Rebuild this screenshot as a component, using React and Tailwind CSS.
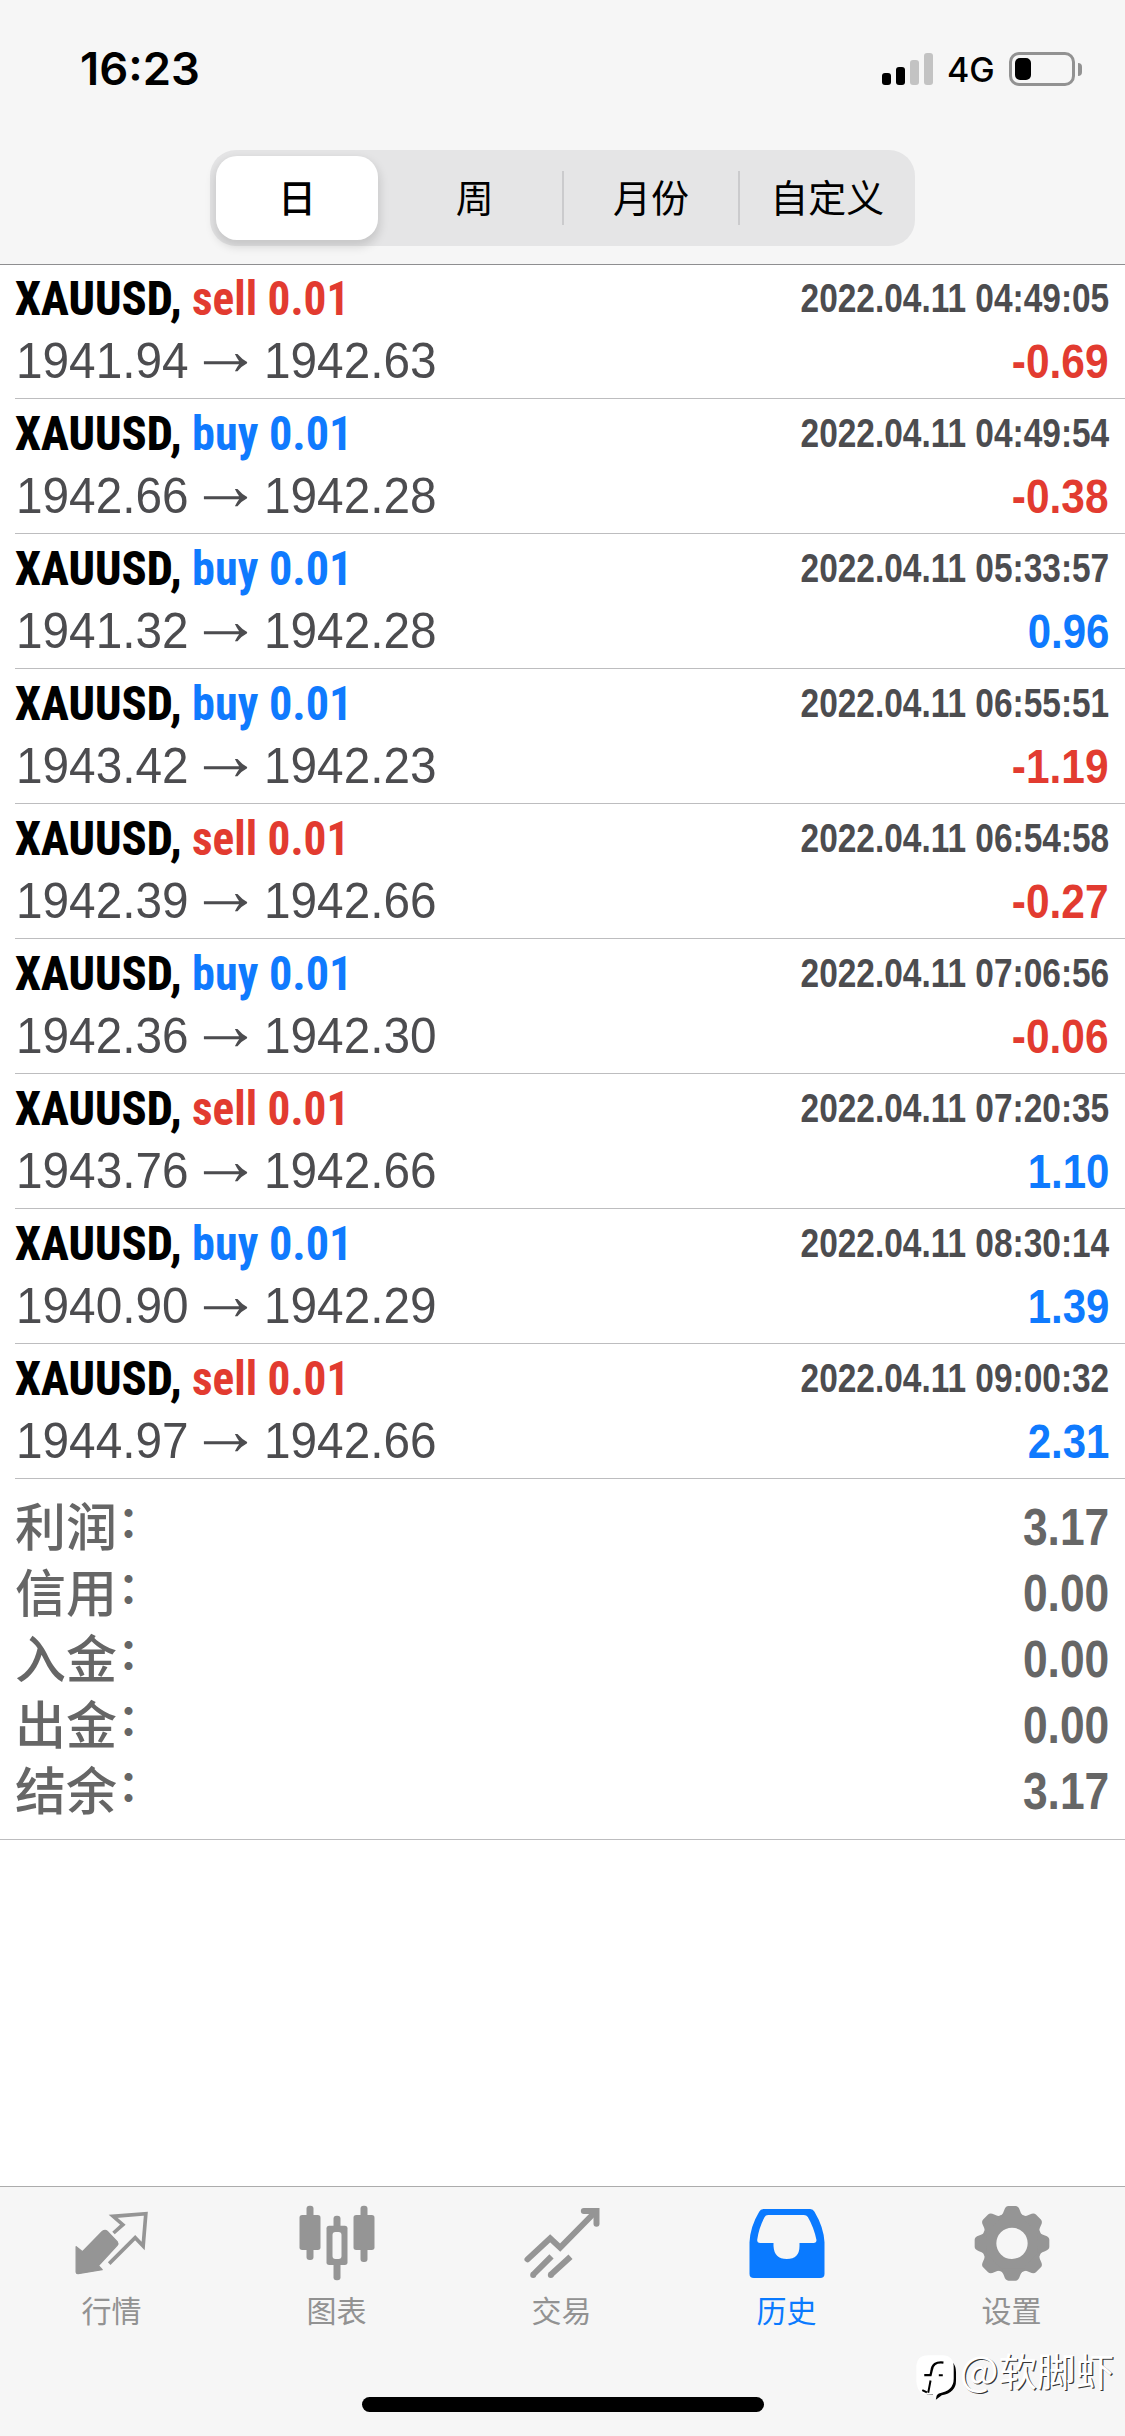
const DEALS = [
  { side: "sell", open: "1941.94", close: "1942.63", time: "2022.04.11 04:49:05", profit: "-0.69" },
  { side: "buy", open: "1942.66", close: "1942.28", time: "2022.04.11 04:49:54", profit: "-0.38" },
  { side: "buy", open: "1941.32", close: "1942.28", time: "2022.04.11 05:33:57", profit: "0.96" },
  { side: "buy", open: "1943.42", close: "1942.23", time: "2022.04.11 06:55:51", profit: "-1.19" },
  { side: "sell", open: "1942.39", close: "1942.66", time: "2022.04.11 06:54:58", profit: "-0.27" },
  { side: "buy", open: "1942.36", close: "1942.30", time: "2022.04.11 07:06:56", profit: "-0.06" },
  { side: "sell", open: "1943.76", close: "1942.66", time: "2022.04.11 07:20:35", profit: "1.10" },
  { side: "buy", open: "1940.90", close: "1942.29", time: "2022.04.11 08:30:14", profit: "1.39" },
  { side: "sell", open: "1944.97", close: "1942.66", time: "2022.04.11 09:00:32", profit: "2.31" },
];

const SUMMARY = [
  ["利润", "3.17"],
  ["信用", "0.00"],
  ["入金", "0.00"],
  ["出金", "0.00"],
  ["结余", "3.17"],
];

const PERIODS = ["日", "周", "月份", "自定义"];

function StatusBar() {
  return (
    <div className="flex h-[138px] justify-between pl-[80px] pr-[43px]">
      <div className="mt-[42px] origin-left scale-x-[1.02] font-['Inter',sans-serif] text-[44.5px] leading-[54px] font-semibold text-black">
        16:23
      </div>
      <div className="mt-[51px] flex h-9 items-center">
        <div className="flex h-8 items-end gap-[5px]">
          <span className="h-3 w-[9px] rounded-[3px] bg-black" />
          <span className="h-[18px] w-[9px] rounded-[3px] bg-black" />
          <span className="h-[25px] w-[9px] rounded-[3px] bg-[#c3c3c3]" />
          <span className="h-8 w-[9px] rounded-[3px] bg-[#c3c3c3]" />
        </div>
        <span className="ml-[14px] w-[62px] pt-[2px] font-['Inter',sans-serif] text-[34px] leading-9 font-medium text-black">
          4G
        </span>
        <span className="flex h-[34px] w-[66px] rounded-[10px] border-3 border-[#929292] p-[3px]">
          <span className="h-[22px] w-4 rounded-[5px] bg-black" />
        </span>
        <span className="ml-[3px] h-[13px] w-1 rounded-r-full bg-[#929292]" />
      </div>
    </div>
  );
}

function PeriodTabs() {
  return (
    <div className="mx-auto mt-3 grid h-24 w-[705px] grid-cols-4 rounded-[26px] bg-[#e5e5e6] font-['Noto_Sans_CJK_SC',sans-serif] text-[38px] text-black">
      {PERIODS.map((label, i) => (
        <div key={label} className="flex items-center">
          {i === 0 ? (
            <div className="mr-[8px] ml-[6px] flex h-[84px] flex-1 items-center justify-center rounded-[21px] bg-white pb-[5px] font-medium shadow-[0_5px_10px_2px_rgba(0,0,0,0.13)]">
              {label}
            </div>
          ) : (
            <>
              <span className={i > 1 ? "-ml-px h-[54px] w-[2px] bg-[#cbcbcd]" : "-ml-px w-[2px]"} />
              <span className="flex-1 pb-[5px] text-center">{label}</span>
            </>
          )}
        </div>
      ))}
    </div>
  );
}

function DealRow({ side, open, close, time, profit }) {
  return (
    <div className="ml-[15px] flex h-[135px] flex-col border-b border-[#bdbdbf] pr-4">
      <div className="mt-[5px] flex h-[60px] items-center justify-between">
        <div className="flex font-['Roboto_Condensed',sans-serif] text-[48.2px] leading-[60px]">
          <span className="w-[177px] origin-left scale-x-[0.96] font-extrabold whitespace-nowrap text-black">XAUUSD,</span>
          <span
            className={
              side === "sell"
                ? "origin-left scale-x-[0.94] font-bold whitespace-nowrap text-[#e23b30]"
                : "origin-left scale-x-[0.96] font-bold whitespace-nowrap text-[#0f7afe]"
            }
          >
            {side} 0.01
          </span>
        </div>
        <span className="origin-right scale-x-[0.836] pb-[2px] font-['Liberation_Sans',sans-serif] text-[40px] leading-[58px] font-bold whitespace-nowrap text-[#4c4c4f]">
          {time}
        </span>
      </div>
      <div className="mt-[2px] flex h-[60px] items-center justify-between font-['Liberation_Sans',sans-serif]">
        <div className="flex items-center text-[49.9px] leading-[60px] text-[#4c4c4f]">
          <span className="ml-px w-[181px] origin-left scale-x-[0.957]">{open}</span>
          <span className="-ml-2 w-[75px] -translate-y-[11px] text-[73px]">→</span>
          <span className="origin-left scale-x-[0.957]">{close}</span>
        </div>
        <span
          className={
            profit.startsWith("-")
              ? "origin-right scale-x-[0.875] text-[48.5px] leading-[60px] font-bold text-[#e23b30]"
              : "origin-right scale-x-[0.865] text-[48.5px] leading-[60px] font-bold text-[#0f7afe]"
          }
        >
          {profit}
        </span>
      </div>
    </div>
  );
}

function QuotesIcon() {
  return (
    <svg viewBox="22.5 30 270 270" className="size-[90px]" fill="none" stroke="#959595">
      <path d="M47 170 66 185 126 124q8-6 14 0l30 31q4 6 0 11l-56 61 11 12-72 12q-5 0-6-5Z" fill="#959595" strokeWidth="4" strokeLinejoin="round" />
      <path d="M159 129 187 104 158 79 256 71 248 168 224 143 146 221" strokeWidth="11" />
    </svg>
  );
}

function ChartIcon() {
  return (
    <svg viewBox="697.5 30 270 270" className="size-[90px]" fill="#959595">
      <rect x="738" y="47" width="21" height="163" rx="9" />
      <rect x="717" y="75" width="63" height="105" rx="8" />
      <rect x="900" y="47" width="21" height="169" rx="9" />
      <rect x="879" y="75" width="63" height="105" rx="8" />
      <rect x="819" y="77" width="21" height="194" rx="9" />
      <rect x="798" y="107" width="63" height="118" rx="8" />
      <rect x="816" y="126" width="27" height="81" rx="9" fill="#f6f6f6" />
    </svg>
  );
}

function TradeIcon() {
  return (
    <svg viewBox="22.5 30 270 270" className="size-[90px]" fill="none" stroke="#959595" strokeWidth="18">
      <path d="M51 208 119 145 149 173 254 66" strokeLinecap="round" />
      <path d="M220 63H258V101" strokeLinecap="round" />
      <path d="M67 255 123 199M120 255 180 200" />
      <circle cx="68" cy="255" r="9" fill="#959595" stroke="none" />
      <circle cx="121" cy="255" r="9" fill="#959595" stroke="none" />
    </svg>
  );
}

function HistoryIcon() {
  return (
    <svg viewBox="697.5 30 270 270" className="size-[90px]" fill="#0a7aff" fillRule="evenodd">
      <path d="M759 57H899q9 0 13 8 28 47 30 92v94q0 13-13 13H730q-13 0-13-13v-94q2-47 29-92 4-8 13-8ZM773 75q-8 0-11 7-17 32-22 68 0 9 9 9h40v9q2 39 40 39t38-39v-9h42q9 0 9-9-8-38-26-69-4-6-12-6Z" />
    </svg>
  );
}

const COG_TEETH = [0, 45, 90, 135, 180, 225, 270, 315];

function SettingsIcon() {
  return (
    <svg viewBox="202.5 30 270 270" className="size-[90px]" fill="none">
      <circle cx="334.5" cy="160" r="69" stroke="#959595" strokeWidth="44" />
      {COG_TEETH.map((angle) => (
        <path
          key={angle}
          transform={`rotate(${angle} 334.5 160)`}
          d="M292 84q14-6 19-23 4-13 13-13h21q9 0 13 13 5 17 19 23Z"
          fill="#959595"
        />
      ))}
    </svg>
  );
}

const TABS = [
  { label: "行情", Icon: QuotesIcon },
  { label: "图表", Icon: ChartIcon },
  { label: "交易", Icon: TradeIcon },
  { label: "历史", Icon: HistoryIcon, active: true },
  { label: "设置", Icon: SettingsIcon },
];

function TabBar() {
  return (
    <nav className="relative flex h-[250px] flex-col items-center border-t border-[#acacac] bg-[#f6f6f6] font-['Noto_Sans_CJK_SC',sans-serif]">
      <div className="mt-[13px] grid w-full grid-cols-5">
        {TABS.map(({ label, Icon, active }) => (
          <div key={label} className="flex flex-col items-center">
            <Icon />
            <span
              className={
                active
                  ? "-ml-[2px] text-[30px] leading-[38px] text-[#0a7aff]"
                  : "-ml-[2px] text-[30px] leading-[38px] text-[#929292]"
              }
            >
              {label}
            </span>
          </div>
        ))}
      </div>
      <div className="mt-[69px] h-[15px] w-[402px] rounded-full bg-black" />
      <div className="absolute top-[157px] right-[11px] flex items-start">
        <svg viewBox="24 24 130 140" className="mt-[10px] h-[47px] w-[43px]">
          <path d="M112 38Q148 42 148 78V104Q148 140 105 148L87 161 90 146 60 145 56 138Z" fill="#000" />
          <path d="M64 27H106Q141 27 141 64V98Q141 135 96 142L87 150 84 160 78 145H52Q28 135 28 104V64Q28 27 64 27Z" fill="#fff" />
          <path d="M110 49Q76 45 74 74L71 87H52" fill="none" stroke="#000" strokeWidth="7" />
          <path d="M96 87H108M71 103 64 140M46 132 60 139" fill="none" stroke="#000" strokeWidth="6" />
        </svg>
        <span className="ml-[2px] text-[38.5px] leading-[48px] whitespace-nowrap text-white [text-shadow:1.2px_1.2px_0_rgba(0,0,0,0.8)]">
          <span className="text-[41px]">@</span>软脚虾
        </span>
      </div>
    </nav>
  );
}

export default function App() {
  return (
    <div className="flex h-[2436px] w-[1125px] flex-col overflow-hidden bg-white">
      <header className="relative z-10 -mb-px h-[265px] shrink-0 border-b border-[#8e8e90] bg-[#f6f6f6]">
        <StatusBar />
        <PeriodTabs />
      </header>
      <main className="flex-1">
        {DEALS.map((deal) => (
          <DealRow key={deal.time} {...deal} />
        ))}
        <div className="flex h-[361px] flex-col border-b border-[#bdbdbf] pt-[15px] pr-4 pl-[15px] text-[#666]">
          {SUMMARY.map(([label, value]) => (
            <div key={label} className="flex h-[66px] items-center justify-between">
              <span className="flex -translate-y-[3px] items-baseline font-['Noto_Sans_CJK_SC',sans-serif] text-[51px] leading-[66px] font-medium">
                {label}
                <span className="ml-px -translate-y-[9px] text-[42px] leading-[50px] font-bold">：</span>
              </span>
              <span className="origin-right translate-y-px scale-x-[0.87] font-['Liberation_Sans',sans-serif] text-[51px] leading-[66px] font-bold">
                {value}
              </span>
            </div>
          ))}
        </div>
      </main>
      <TabBar />
    </div>
  );
}
